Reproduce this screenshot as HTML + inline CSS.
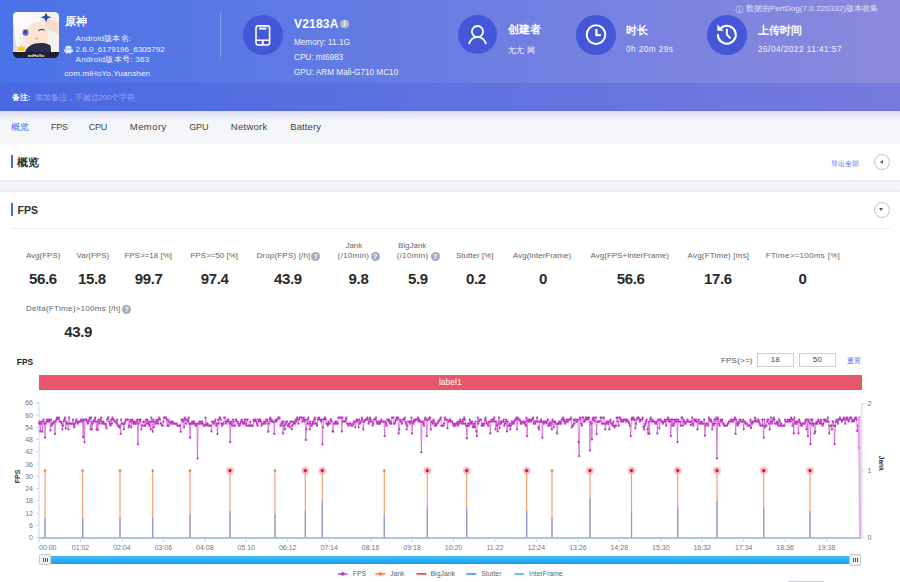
<!DOCTYPE html>
<html><head><meta charset="utf-8">
<style>
*{margin:0;padding:0;box-sizing:border-box}
html,body{width:900px;height:582px;overflow:hidden;background:#fff;font-family:"Liberation Sans",sans-serif}
.a{position:absolute}
.t{position:absolute;white-space:nowrap;line-height:1}
.w{color:#fff}
.hdr{left:0;top:0;width:900px;height:83px;background:linear-gradient(90deg,#4A72E8,#8B89DD)}
.rem{left:0;top:83px;width:900px;height:28px;background:linear-gradient(90deg,#4869E3,#767ADC)}
.tabs{left:0;top:111px;width:900px;height:33px;background:#f4f6fa}
.gap{left:0;top:180px;width:900px;height:12px;background:#f3f5f9}
.circ{position:absolute;border-radius:50%;background:#4457D8}
.lbl{font-size:8px;color:#666}
.val{font-size:15px;letter-spacing:-.35px;font-weight:bold;color:#2a2a2a}
.q{position:absolute;width:9px;height:9px;border-radius:50%;background:#a4aac4;color:#fff;font-size:7px;line-height:9px;text-align:center;font-weight:bold}
</style></head><body>
<!-- header -->
<div class="a hdr"></div>
<div class="a rem"></div>
<div class="a" style="left:0;top:108.5px;width:900px;height:2.5px;background:linear-gradient(rgba(40,60,200,0),rgba(40,60,200,.12))"></div>
<div class="a" style="left:0;top:111px;width:900px;height:9px;background:linear-gradient(#dcdcef,#f4f6fa)"></div>
<div class="a tabs" style="top:120px;height:24px"></div>

<!-- app icon -->
<svg class="a" style="left:12.7px;top:12px" width="46" height="46" viewBox="0 0 46 46">
 <defs><clipPath id="rc"><rect x="0" y="0" width="46" height="46" rx="4.5"/></clipPath></defs>
 <g clip-path="url(#rc)">
  <rect width="46" height="46" fill="#f4f1ec"/>
  <path d="M0 0 V40 H8 C6 30 6 18 10 12 C14 6 24 4 30 8 L34 0Z" fill="#fbfaf8"/>
  <path d="M0 8 C2 20 2 30 4 40 H0Z" fill="#dcdad8"/>
  <path d="M9 16 C10 10 18 8 25 10 C32 12 36 18 35 26 C34 32 28 35 20 34 C13 33 9 26 9 16Z" fill="#fbe4d4"/>
  <path d="M8 12 C12 6 22 5 28 9 C22 9 16 12 12 18 C11 22 10 24 9 26Z" fill="#fdfcfa"/>
  <ellipse cx="12.5" cy="20.5" rx="3" ry="3.2" fill="#5a6cc4"/>
  <ellipse cx="12.3" cy="19.8" rx="1.2" ry="1.4" fill="#2a3480"/>
  <path d="M25.5 18.8 q3 -2.2 6 -.6" stroke="#3a3040" stroke-width="1.1" fill="none"/>
  <path d="M22 26.5 q1.5 .8 3 0" stroke="#e07a80" stroke-width="1" fill="none"/>
  <path d="M31 8 C36 6 42 8 46 12 V22 C42 20 38 18 34 18 C32 16 31 12 31 8Z" fill="#f7dccb"/>
  <path d="M33 0.5 L34.6 4 L38.5 5.2 L34.6 6.4 L33 10 L31.4 6.4 L27.5 5.2 L31.4 4Z" fill="#2e4aa0"/>
  <path d="M12 40 C14 34 20 31 28 31 C34 31 38 33 40 36 V40Z" fill="#2b2b4c"/>
  <path d="M35 24 C40 26 44 30 46 34 V40 H38 C38 34 37 29 35 24Z" fill="#f6f4f1"/>
  <path d="M3.5 33.5 L6 35.5 L8 32.8 L10 35.5 L12.5 33.5 L11.5 39 H4.5Z" fill="#f2cd40"/>
  <rect x="0" y="40" width="46" height="6" fill="#202030"/>
  <text x="23" y="44.8" text-anchor="middle" font-size="4.4" font-weight="bold" fill="#fff">miHoYo</text>
 </g>
</svg>
<div class="t w" style="left:64.9px;top:15.8px;font-size:11px;font-weight:bold">原神</div>
<div class="t w" style="left:75.6px;top:35.4px;font-size:8px;letter-spacing:.15px;opacity:.92">Android版本名:</div>
<svg class="a" style="left:64px;top:45px" width="9" height="9" viewBox="0 0 9 9"><path d="M1.2 3.8 a3.3 3.1 0 0 1 6.6 0 z M1.2 4.3 h6.6 v2.6 q0 .8 -.8 .8 h-.6 v1.3 h-1 v-1.3 h-1.8 v1.3 h-1 v-1.3 h-.6 q-.8 0 -.8 -.8z M0 4.3 h.8 v2.8 h-.8z M8.2 4.3 h.8 v2.8 h-.8z" fill="#e8ecff"/><path d="M2.2 .6 l1 1.4 M6.8 .6 l-1 1.4" stroke="#e8ecff" stroke-width=".5"/></svg>
<div class="t w" style="left:75.6px;top:46.4px;font-size:8px;opacity:.92">2.6.0_6179196_6305792</div>
<div class="t w" style="left:75.6px;top:56.2px;font-size:8px;letter-spacing:.3px;opacity:.92">Android版本号: 363</div>
<div class="t w" style="left:64.4px;top:70px;font-size:8.1px;letter-spacing:.1px;opacity:.92">com.miHoYo.Yuanshen</div>
<div class="a" style="left:220px;top:13px;width:1px;height:44px;background:rgba(255,255,255,.3)"></div>

<!-- device -->
<div class="circ" style="left:243px;top:14.5px;width:40px;height:40px"></div>
<svg class="a" style="left:254px;top:23.5px" width="18" height="22" viewBox="0 0 18 22">
 <rect x="2" y="1.85" width="13.6" height="19.1" rx="2.2" fill="none" stroke="#fff" stroke-width="1.6"/>
 <rect x="5.1" y="3.5" width="7.4" height="2.1" fill="#fff" opacity=".9"/>
 <path d="M2 16.2 H15.6" stroke="#fff" stroke-width="1.5"/>
 <path d="M8.8 16.2 V21" stroke="#fff" stroke-width="2"/>
</svg>
<div class="t w" style="left:294px;top:17.6px;font-size:12px;letter-spacing:.2px;font-weight:bold">V2183A</div>
<div class="q" style="left:340.2px;top:19.6px;width:8.8px;height:8.8px;line-height:8.8px;background:#b8bccb;font-family:'Liberation Serif';font-style:italic;font-size:7.5px">i</div>
<div class="t w" style="left:294px;top:38.9px;font-size:8.2px;opacity:.92">Memory: 11.1G</div>
<div class="t w" style="left:294px;top:53.9px;font-size:8.2px;opacity:.92">CPU: mt6983</div>
<div class="t w" style="left:294px;top:68.9px;font-size:8.2px;opacity:.92">GPU: ARM Mali-G710 MC10</div>

<!-- creator -->
<div class="circ" style="left:457.6px;top:14.6px;width:39.5px;height:39.5px"></div>
<svg class="a" style="left:466px;top:23px" width="23" height="23" viewBox="0 0 23 23">
 <circle cx="11.5" cy="8.6" r="5.6" fill="none" stroke="#fff" stroke-width="1.8"/>
 <path d="M3.2 20.4 C4.5 16.5 7.8 14.2 11.5 14.2 C15.2 14.2 18.5 16.5 19.8 20.4" fill="none" stroke="#fff" stroke-width="1.8" stroke-linecap="round"/>
</svg>
<div class="t w" style="left:508px;top:24.2px;font-size:11px;font-weight:bold">创建者</div>
<div class="t w" style="left:508px;top:46.5px;font-size:8px;letter-spacing:.3px;opacity:.92">尢尢 网</div>

<!-- duration -->
<div class="circ" style="left:576px;top:15px;width:39.5px;height:39.5px"></div>
<svg class="a" style="left:583.5px;top:23px" width="24" height="24" viewBox="0 0 24 24">
 <circle cx="12" cy="11.6" r="9.3" fill="none" stroke="#fff" stroke-width="2"/>
 <path d="M12.4 5.9 V12.2 H16.8" fill="none" stroke="#fff" stroke-width="2.2"/>
</svg>
<div class="t w" style="left:626px;top:24.5px;font-size:11px;font-weight:bold">时长</div>
<div class="t w" style="left:626px;top:46.2px;font-size:8.2px;letter-spacing:.45px;opacity:.92">0h 20m 29s</div>

<!-- upload -->
<div class="circ" style="left:707.2px;top:15px;width:39.7px;height:39.5px"></div>
<svg class="a" style="left:713px;top:21px" width="28" height="28" viewBox="0 0 28 28">
 <path d="M4.9 13.9 A8.95 8.95 0 1 0 9.6 5.9" fill="none" stroke="#fff" stroke-width="2.1" stroke-linecap="round"/>
 <path d="M4.4 3.4 V9.8 H10.6 Z" fill="#fff"/><path d="M6 8.3 L9.8 5.8" stroke="#fff" stroke-width="2.1" stroke-linecap="round"/>
 <path d="M13.9 8.6 V13.6 L16.9 16.8" fill="none" stroke="#fff" stroke-width="2" stroke-linecap="round" stroke-linejoin="round"/>
</svg>
<div class="t w" style="left:758px;top:25px;font-size:11px;font-weight:bold">上传时间</div>
<div class="t w" style="left:758px;top:46.2px;font-size:8.2px;letter-spacing:.5px;opacity:.92">26/04/2022 11:41:57</div>

<svg class="a" style="left:734.5px;top:4.5px" width="9" height="9" viewBox="0 0 9 9"><circle cx="4.5" cy="4.5" r="3.6" fill="none" stroke="rgba(255,255,255,.6)" stroke-width=".7"/><path d="M4.5 3.8 V6.6 M4.5 2.4 V3" stroke="rgba(255,255,255,.8)" stroke-width=".8"/></svg>
<div class="t w" style="left:745.6px;top:5.3px;font-size:7.9px;letter-spacing:.12px;opacity:.75">数据由PerfDog(7.0.220332)版本收集</div>

<!-- remarks -->
<div class="t w" style="left:12px;top:93.7px;font-size:7.5px;font-weight:bold">备注:</div>
<div class="t" style="left:34.5px;top:93.7px;font-size:7.6px;color:rgba(255,255,255,.42)">添加备注，不超过200个字符</div>

<!-- tabs -->
<div class="t" style="left:10.5px;top:122.5px;font-size:9.2px;font-weight:500;color:#3c6cf2">概览</div>
<div class="t" style="left:51px;top:122.5px;font-size:9px;letter-spacing:-.3px;color:#444">FPS</div>
<div class="t" style="left:88.7px;top:122.5px;font-size:9px;letter-spacing:-.2px;color:#444">CPU</div>
<div class="t" style="left:129.8px;top:122px;font-size:9.5px;letter-spacing:.43px;color:#444">Memory</div>
<div class="t" style="left:189.3px;top:122.5px;font-size:9px;letter-spacing:-.2px;color:#444">GPU</div>
<div class="t" style="left:230.8px;top:122px;font-size:9.5px;letter-spacing:.27px;color:#444">Network</div>
<div class="t" style="left:290.3px;top:122px;font-size:9.5px;letter-spacing:.1px;color:#444">Battery</div>

<!-- card 1 -->
<div class="a" style="left:0;top:144px;width:900px;height:36px;background:#fff"></div>
<div class="a gap"></div>
<div class="a" style="left:0;top:180px;width:900px;height:3px;background:linear-gradient(#eaebf5,#f3f5f9)"></div>
<div class="a" style="left:0;top:189px;width:900px;height:3px;background:linear-gradient(#f3f5f9,#e8eaf2)"></div>
<div class="a" style="left:10.5px;top:155.3px;width:2.2px;height:13px;background:#3f6ff0"></div>
<div class="t" style="left:17.4px;top:157.2px;font-size:11px;font-weight:bold;color:#333">概览</div>
<div class="t" style="left:830.6px;top:159.5px;font-size:7.2px;font-weight:500;color:#3a6af0">导出全部</div>
<div class="a" style="left:873.7px;top:154px;width:16.4px;height:16.4px;border-radius:50%;border:1px solid #c4c4cc"></div>
<div class="a" style="left:879.6px;top:159.7px;width:0;height:0;border-top:2.6px solid transparent;border-bottom:2.6px solid transparent;border-right:3.4px solid #555"></div>

<!-- card 2 -->
<div class="a" style="left:10.5px;top:202.8px;width:2.2px;height:13.6px;background:#3f6ff0"></div>
<div class="t" style="left:17.5px;top:205px;font-size:10.5px;font-weight:bold;color:#333">FPS</div>
<div class="a" style="left:873.7px;top:201.5px;width:16.4px;height:16.4px;border-radius:50%;border:1px solid #c4c4cc"></div>
<div class="a" style="left:879.2px;top:208.4px;width:0;height:0;border-left:2.7px solid transparent;border-right:2.7px solid transparent;border-top:3.4px solid #555"></div>
<div class="a" style="left:11px;top:227.6px;width:879px;height:1px;background:#ececf0"></div>

<!-- metrics -->
<div class="t lbl" style="left:25.9px;top:252.1px">Avg(FPS)</div>
<div class="t val" style="left:29px;top:271.4px">56.6</div>
<div class="t lbl" style="left:76.5px;top:252.1px">Var(FPS)</div>
<div class="t val" style="left:78px;top:271.4px">15.8</div>
<div class="t lbl" style="left:124.4px;top:252.1px">FPS&gt;=18 [%]</div>
<div class="t val" style="left:134.7px;top:271.4px">99.7</div>
<div class="t lbl" style="left:190.4px;top:252.1px">FPS&gt;=50 [%]</div>
<div class="t val" style="left:200.7px;top:271.4px">97.4</div>
<div class="t lbl" style="left:256.4px;top:252.1px;letter-spacing:.18px">Drop(FPS) [/h]</div>
<div class="q" style="left:311.25px;top:251.95px">?</div>
<div class="t val" style="left:274px;top:271.4px">43.9</div>
<div class="t lbl" style="left:345.4px;top:241.8px">Jank</div>
<div class="t lbl" style="left:337.6px;top:252.1px;letter-spacing:.3px">(/10min)</div>
<div class="q" style="left:370.75px;top:251.95px">?</div>
<div class="t val" style="left:348.6px;top:271.4px">9.8</div>
<div class="t lbl" style="left:398px;top:241.8px">BigJank</div>
<div class="t lbl" style="left:396.7px;top:252.1px;letter-spacing:.3px">(/10min)</div>
<div class="q" style="left:430.55px;top:251.95px">?</div>
<div class="t val" style="left:408px;top:271.4px">5.9</div>
<div class="t lbl" style="left:456px;top:252.1px">Stutter [%]</div>
<div class="t val" style="left:466px;top:271.4px">0.2</div>
<div class="t lbl" style="left:513px;top:252.1px">Avg(InterFrame)</div>
<div class="t val" style="left:539px;top:271.4px">0</div>
<div class="t lbl" style="left:590.6px;top:252.1px">Avg(FPS+InterFrame)</div>
<div class="t val" style="left:616.7px;top:271.4px">56.6</div>
<div class="t lbl" style="left:687.6px;top:252.1px;letter-spacing:.2px">Avg(FTime) [ms]</div>
<div class="t val" style="left:704px;top:271.4px">17.6</div>
<div class="t lbl" style="left:765.8px;top:252.1px;letter-spacing:.3px">FTime&gt;=100ms [%]</div>
<div class="t val" style="left:798.4px;top:271.4px">0</div>
<div class="t lbl" style="left:26px;top:305.3px;letter-spacing:.27px">Delta(FTime)&gt;100ms [/h]</div>
<div class="q" style="left:122.05px;top:304.95px">?</div>
<div class="t val" style="left:64.3px;top:324.3px">43.9</div>

<!-- chart header -->
<div class="t" style="left:16.8px;top:357.6px;font-size:8.4px;font-weight:bold;color:#222">FPS</div>
<div class="t" style="left:721px;top:357px;font-size:8px;letter-spacing:.2px;color:#555">FPS(&gt;=)</div>
<div class="a" style="left:757px;top:353.4px;width:36.6px;height:13.2px;border:1px solid #cfd1da;font-size:8px;color:#444;text-align:center;line-height:12.6px">18</div>
<div class="a" style="left:799px;top:353.4px;width:36.6px;height:13.2px;border:1px solid #cfd1da;font-size:8px;color:#444;text-align:center;line-height:12.6px">50</div>
<div class="t" style="left:847px;top:357px;font-size:7.4px;font-weight:500;color:#3a6af0">重置</div>
<div class="a" style="left:39px;top:374.7px;width:822.6px;height:15.3px;background:#E8566A;color:#fff;font-size:8.5px;text-align:center;line-height:14.6px">label1</div>

<svg width="900" height="582" style="position:absolute;left:0;top:0">
<line x1="39" y1="402.7" x2="39" y2="538" stroke="#ccd6eb" stroke-width="1"/>
<line x1="861.8" y1="402.7" x2="861.8" y2="538" stroke="#d8dbe4" stroke-width="1.2"/>
<line x1="36" y1="537.7" x2="39" y2="537.7" stroke="#ccd6eb" stroke-width="1"/>
<text x="33" y="540.2" text-anchor="end" font-size="7" fill="#777">0</text>
<line x1="36" y1="525.4" x2="39" y2="525.4" stroke="#ccd6eb" stroke-width="1"/>
<text x="33" y="527.9" text-anchor="end" font-size="7" fill="#777">6</text>
<line x1="36" y1="513.2" x2="39" y2="513.2" stroke="#ccd6eb" stroke-width="1"/>
<text x="33" y="515.7" text-anchor="end" font-size="7" fill="#777">12</text>
<line x1="36" y1="500.9" x2="39" y2="500.9" stroke="#ccd6eb" stroke-width="1"/>
<text x="33" y="503.4" text-anchor="end" font-size="7" fill="#777">18</text>
<line x1="36" y1="488.6" x2="39" y2="488.6" stroke="#ccd6eb" stroke-width="1"/>
<text x="33" y="491.1" text-anchor="end" font-size="7" fill="#777">24</text>
<line x1="36" y1="476.4" x2="39" y2="476.4" stroke="#ccd6eb" stroke-width="1"/>
<text x="33" y="478.9" text-anchor="end" font-size="7" fill="#777">30</text>
<line x1="36" y1="464.1" x2="39" y2="464.1" stroke="#ccd6eb" stroke-width="1"/>
<text x="33" y="466.6" text-anchor="end" font-size="7" fill="#777">36</text>
<line x1="36" y1="451.8" x2="39" y2="451.8" stroke="#ccd6eb" stroke-width="1"/>
<text x="33" y="454.3" text-anchor="end" font-size="7" fill="#777">42</text>
<line x1="36" y1="439.5" x2="39" y2="439.5" stroke="#ccd6eb" stroke-width="1"/>
<text x="33" y="442.0" text-anchor="end" font-size="7" fill="#777">48</text>
<line x1="36" y1="427.3" x2="39" y2="427.3" stroke="#ccd6eb" stroke-width="1"/>
<text x="33" y="429.8" text-anchor="end" font-size="7" fill="#777">54</text>
<line x1="36" y1="415.0" x2="39" y2="415.0" stroke="#ccd6eb" stroke-width="1"/>
<text x="33" y="417.5" text-anchor="end" font-size="7" fill="#777">60</text>
<line x1="36" y1="402.7" x2="39" y2="402.7" stroke="#ccd6eb" stroke-width="1"/>
<text x="33" y="405.2" text-anchor="end" font-size="7" fill="#777">66</text>
<line x1="861.5" y1="537.7" x2="864.5" y2="537.7" stroke="#ccd6eb" stroke-width="1"/>
<text x="867.5" y="540.2" font-size="7" fill="#777">0</text>
<line x1="861.5" y1="470.6" x2="864.5" y2="470.6" stroke="#ccd6eb" stroke-width="1"/>
<text x="867.5" y="473.1" font-size="7" fill="#777">1</text>
<line x1="861.5" y1="403.5" x2="864.5" y2="403.5" stroke="#ccd6eb" stroke-width="1"/>
<text x="867.5" y="406.0" font-size="7" fill="#777">2</text>
<line x1="39.0" y1="539.8" x2="39.0" y2="541.6" stroke="#aab" stroke-width="0.8"/>
<text x="39.0" y="549.5" font-size="7" fill="#777">00:00</text>
<line x1="80.5" y1="539.8" x2="80.5" y2="541.6" stroke="#aab" stroke-width="0.8"/>
<text x="80.5" y="549.5" text-anchor="middle" font-size="7" fill="#777">01:02</text>
<line x1="121.9" y1="539.8" x2="121.9" y2="541.6" stroke="#aab" stroke-width="0.8"/>
<text x="121.9" y="549.5" text-anchor="middle" font-size="7" fill="#777">02:04</text>
<line x1="163.4" y1="539.8" x2="163.4" y2="541.6" stroke="#aab" stroke-width="0.8"/>
<text x="163.4" y="549.5" text-anchor="middle" font-size="7" fill="#777">03:06</text>
<line x1="204.8" y1="539.8" x2="204.8" y2="541.6" stroke="#aab" stroke-width="0.8"/>
<text x="204.8" y="549.5" text-anchor="middle" font-size="7" fill="#777">04:08</text>
<line x1="246.2" y1="539.8" x2="246.2" y2="541.6" stroke="#aab" stroke-width="0.8"/>
<text x="246.2" y="549.5" text-anchor="middle" font-size="7" fill="#777">05:10</text>
<line x1="287.7" y1="539.8" x2="287.7" y2="541.6" stroke="#aab" stroke-width="0.8"/>
<text x="287.7" y="549.5" text-anchor="middle" font-size="7" fill="#777">06:12</text>
<line x1="329.2" y1="539.8" x2="329.2" y2="541.6" stroke="#aab" stroke-width="0.8"/>
<text x="329.2" y="549.5" text-anchor="middle" font-size="7" fill="#777">07:14</text>
<line x1="370.6" y1="539.8" x2="370.6" y2="541.6" stroke="#aab" stroke-width="0.8"/>
<text x="370.6" y="549.5" text-anchor="middle" font-size="7" fill="#777">08:16</text>
<line x1="412.1" y1="539.8" x2="412.1" y2="541.6" stroke="#aab" stroke-width="0.8"/>
<text x="412.1" y="549.5" text-anchor="middle" font-size="7" fill="#777">09:18</text>
<line x1="453.5" y1="539.8" x2="453.5" y2="541.6" stroke="#aab" stroke-width="0.8"/>
<text x="453.5" y="549.5" text-anchor="middle" font-size="7" fill="#777">10:20</text>
<line x1="495.0" y1="539.8" x2="495.0" y2="541.6" stroke="#aab" stroke-width="0.8"/>
<text x="495.0" y="549.5" text-anchor="middle" font-size="7" fill="#777">11:22</text>
<line x1="536.4" y1="539.8" x2="536.4" y2="541.6" stroke="#aab" stroke-width="0.8"/>
<text x="536.4" y="549.5" text-anchor="middle" font-size="7" fill="#777">12:24</text>
<line x1="577.9" y1="539.8" x2="577.9" y2="541.6" stroke="#aab" stroke-width="0.8"/>
<text x="577.9" y="549.5" text-anchor="middle" font-size="7" fill="#777">13:26</text>
<line x1="619.3" y1="539.8" x2="619.3" y2="541.6" stroke="#aab" stroke-width="0.8"/>
<text x="619.3" y="549.5" text-anchor="middle" font-size="7" fill="#777">14:28</text>
<line x1="660.8" y1="539.8" x2="660.8" y2="541.6" stroke="#aab" stroke-width="0.8"/>
<text x="660.8" y="549.5" text-anchor="middle" font-size="7" fill="#777">15:30</text>
<line x1="702.2" y1="539.8" x2="702.2" y2="541.6" stroke="#aab" stroke-width="0.8"/>
<text x="702.2" y="549.5" text-anchor="middle" font-size="7" fill="#777">16:32</text>
<line x1="743.7" y1="539.8" x2="743.7" y2="541.6" stroke="#aab" stroke-width="0.8"/>
<text x="743.7" y="549.5" text-anchor="middle" font-size="7" fill="#777">17:34</text>
<line x1="785.1" y1="539.8" x2="785.1" y2="541.6" stroke="#aab" stroke-width="0.8"/>
<text x="785.1" y="549.5" text-anchor="middle" font-size="7" fill="#777">18:36</text>
<line x1="826.6" y1="539.8" x2="826.6" y2="541.6" stroke="#aab" stroke-width="0.8"/>
<text x="826.6" y="549.5" text-anchor="middle" font-size="7" fill="#777">19:38</text>
<line x1="39" y1="538.4" x2="861" y2="538.4" stroke="#9cc8e8" stroke-width="1"/>
<line x1="39" y1="537.6" x2="861" y2="537.6" stroke="#f5a878" stroke-width="1"/>
<line x1="45" y1="537.5" x2="45" y2="470.6" stroke="#fc9d70" stroke-width="1.2"/>
<line x1="45" y1="537.5" x2="45" y2="517.7" stroke="#8a9cdc" stroke-width="1.2"/>
<circle cx="45" cy="470.6" r="1.3" fill="#f5802a"/>
<line x1="82.7" y1="537.5" x2="82.7" y2="470.6" stroke="#fc9d70" stroke-width="1.2"/>
<line x1="82.7" y1="537.5" x2="82.7" y2="517.7" stroke="#8a9cdc" stroke-width="1.2"/>
<circle cx="82.7" cy="470.6" r="1.3" fill="#f5802a"/>
<line x1="120" y1="537.5" x2="120" y2="470.6" stroke="#fc9d70" stroke-width="1.2"/>
<line x1="120" y1="537.5" x2="120" y2="517.7" stroke="#8a9cdc" stroke-width="1.2"/>
<circle cx="120" cy="470.6" r="1.3" fill="#f5802a"/>
<line x1="152.7" y1="537.5" x2="152.7" y2="470.6" stroke="#fc9d70" stroke-width="1.2"/>
<line x1="152.7" y1="537.5" x2="152.7" y2="517.7" stroke="#8a9cdc" stroke-width="1.2"/>
<circle cx="152.7" cy="470.6" r="1.3" fill="#f5802a"/>
<line x1="190" y1="537.5" x2="190" y2="470.6" stroke="#fc9d70" stroke-width="1.2"/>
<line x1="190" y1="537.5" x2="190" y2="514.3" stroke="#8a9cdc" stroke-width="1.2"/>
<circle cx="190" cy="470.6" r="1.3" fill="#f5802a"/>
<line x1="230" y1="537.5" x2="230" y2="470.6" stroke="#fc9d70" stroke-width="1.2"/>
<line x1="230" y1="537.5" x2="230" y2="511" stroke="#8a9cdc" stroke-width="1.2"/>
<circle cx="230" cy="470.6" r="3.8" fill="#f2a0a8" opacity="0.7"/>
<circle cx="230" cy="470.6" r="1.6" fill="#e0102a"/>
<line x1="275" y1="537.5" x2="275" y2="470.6" stroke="#fc9d70" stroke-width="1.2"/>
<line x1="275" y1="537.5" x2="275" y2="514.3" stroke="#8a9cdc" stroke-width="1.2"/>
<circle cx="275" cy="470.6" r="1.3" fill="#f5802a"/>
<line x1="305.3" y1="537.5" x2="305.3" y2="470.6" stroke="#fc9d70" stroke-width="1.2"/>
<line x1="305.3" y1="537.5" x2="305.3" y2="511" stroke="#8a9cdc" stroke-width="1.2"/>
<circle cx="305.3" cy="470.6" r="3.8" fill="#f2a0a8" opacity="0.7"/>
<circle cx="305.3" cy="470.6" r="1.6" fill="#e0102a"/>
<line x1="322.3" y1="537.5" x2="322.3" y2="470.6" stroke="#fc9d70" stroke-width="1.2"/>
<line x1="322.3" y1="537.5" x2="322.3" y2="501" stroke="#8a9cdc" stroke-width="1.2"/>
<circle cx="322.3" cy="470.6" r="3.8" fill="#f2a0a8" opacity="0.7"/>
<circle cx="322.3" cy="470.6" r="1.6" fill="#e0102a"/>
<line x1="384.3" y1="537.5" x2="384.3" y2="470.6" stroke="#fc9d70" stroke-width="1.2"/>
<line x1="384.3" y1="537.5" x2="384.3" y2="514.3" stroke="#8a9cdc" stroke-width="1.2"/>
<circle cx="384.3" cy="470.6" r="1.3" fill="#f5802a"/>
<line x1="427.3" y1="537.5" x2="427.3" y2="470.6" stroke="#fc9d70" stroke-width="1.2"/>
<line x1="427.3" y1="537.5" x2="427.3" y2="507.7" stroke="#8a9cdc" stroke-width="1.2"/>
<circle cx="427.3" cy="470.6" r="3.8" fill="#f2a0a8" opacity="0.7"/>
<circle cx="427.3" cy="470.6" r="1.6" fill="#e0102a"/>
<line x1="466.7" y1="537.5" x2="466.7" y2="470.6" stroke="#fc9d70" stroke-width="1.2"/>
<line x1="466.7" y1="537.5" x2="466.7" y2="507.7" stroke="#8a9cdc" stroke-width="1.2"/>
<circle cx="466.7" cy="470.6" r="3.8" fill="#f2a0a8" opacity="0.7"/>
<circle cx="466.7" cy="470.6" r="1.6" fill="#e0102a"/>
<line x1="526.7" y1="537.5" x2="526.7" y2="470.6" stroke="#fc9d70" stroke-width="1.2"/>
<line x1="526.7" y1="537.5" x2="526.7" y2="511" stroke="#8a9cdc" stroke-width="1.2"/>
<circle cx="526.7" cy="470.6" r="3.8" fill="#f2a0a8" opacity="0.7"/>
<circle cx="526.7" cy="470.6" r="1.6" fill="#e0102a"/>
<line x1="552" y1="537.5" x2="552" y2="470.6" stroke="#fc9d70" stroke-width="1.2"/>
<line x1="552" y1="537.5" x2="552" y2="517.7" stroke="#8a9cdc" stroke-width="1.2"/>
<circle cx="552" cy="470.6" r="1.3" fill="#f5802a"/>
<line x1="590" y1="537.5" x2="590" y2="470.6" stroke="#fc9d70" stroke-width="1.2"/>
<line x1="590" y1="537.5" x2="590" y2="497.7" stroke="#8a9cdc" stroke-width="1.2"/>
<circle cx="590" cy="470.6" r="3.8" fill="#f2a0a8" opacity="0.7"/>
<circle cx="590" cy="470.6" r="1.6" fill="#e0102a"/>
<line x1="631.5" y1="537.5" x2="631.5" y2="470.6" stroke="#fc9d70" stroke-width="1.2"/>
<line x1="631.5" y1="537.5" x2="631.5" y2="511" stroke="#8a9cdc" stroke-width="1.2"/>
<circle cx="631.5" cy="470.6" r="3.8" fill="#f2a0a8" opacity="0.7"/>
<circle cx="631.5" cy="470.6" r="1.6" fill="#e0102a"/>
<line x1="677.7" y1="537.5" x2="677.7" y2="470.6" stroke="#fc9d70" stroke-width="1.2"/>
<line x1="677.7" y1="537.5" x2="677.7" y2="507.7" stroke="#8a9cdc" stroke-width="1.2"/>
<circle cx="677.7" cy="470.6" r="3.8" fill="#f2a0a8" opacity="0.7"/>
<circle cx="677.7" cy="470.6" r="1.6" fill="#e0102a"/>
<line x1="717" y1="537.5" x2="717" y2="470.6" stroke="#fc9d70" stroke-width="1.2"/>
<line x1="717" y1="537.5" x2="717" y2="501" stroke="#8a9cdc" stroke-width="1.2"/>
<circle cx="717" cy="470.6" r="3.8" fill="#f2a0a8" opacity="0.7"/>
<circle cx="717" cy="470.6" r="1.6" fill="#e0102a"/>
<line x1="763.7" y1="537.5" x2="763.7" y2="470.6" stroke="#fc9d70" stroke-width="1.2"/>
<line x1="763.7" y1="537.5" x2="763.7" y2="507.7" stroke="#8a9cdc" stroke-width="1.2"/>
<circle cx="763.7" cy="470.6" r="3.8" fill="#f2a0a8" opacity="0.7"/>
<circle cx="763.7" cy="470.6" r="1.6" fill="#e0102a"/>
<line x1="810" y1="537.5" x2="810" y2="470.6" stroke="#fc9d70" stroke-width="1.2"/>
<line x1="810" y1="537.5" x2="810" y2="511" stroke="#8a9cdc" stroke-width="1.2"/>
<circle cx="810" cy="470.6" r="3.8" fill="#f2a0a8" opacity="0.7"/>
<circle cx="810" cy="470.6" r="1.6" fill="#e0102a"/>
<path d="M39.0 423.7 L39.7 421.6 L40.3 431.4 L41.0 423.7 L41.7 421.6 L42.3 431.7 L43.0 421.6 L43.7 419.6 L44.3 423.7 L45.0 437.7 L45.7 423.7 L46.4 421.6 L47.0 419.6 L47.7 421.6 L48.4 419.6 L49.0 421.6 L49.7 419.6 L50.4 430.6 L51.0 419.6 L51.7 425.7 L52.4 423.7 L53.0 423.7 L53.7 421.6 L54.4 421.6 L55.0 433.9 L55.7 421.6 L56.4 419.6 L57.1 417.6 L57.7 417.6 L58.4 419.6 L59.1 417.6 L59.7 421.6 L60.4 421.6 L61.1 421.6 L61.7 423.7 L62.4 429.3 L63.1 425.7 L63.7 421.6 L64.4 419.6 L65.1 417.6 L65.7 428.3 L66.4 421.6 L67.1 423.7 L67.7 423.7 L68.4 429.3 L69.1 417.6 L69.8 423.7 L70.4 423.7 L71.1 423.7 L71.8 423.7 L72.4 423.7 L73.1 419.6 L73.8 425.4 L74.4 427.3 L75.1 423.7 L75.8 421.6 L76.4 419.6 L77.1 421.6 L77.8 423.7 L78.4 421.6 L79.1 421.6 L79.8 421.6 L80.5 421.6 L81.1 419.6 L81.8 419.6 L82.5 421.6 L83.1 437.2 L83.8 419.6 L84.5 442.1 L85.1 419.6 L85.8 419.6 L86.5 419.6 L87.1 421.6 L87.8 423.7 L88.5 421.6 L89.1 419.6 L89.8 417.6 L90.5 429.3 L91.1 417.6 L91.8 429.3 L92.5 423.7 L93.2 421.6 L93.8 421.6 L94.5 419.6 L95.2 417.6 L95.8 421.6 L96.5 429.3 L97.2 421.6 L97.8 429.9 L98.5 419.6 L99.2 423.7 L99.8 421.6 L100.5 419.6 L101.2 417.6 L101.8 423.7 L102.5 421.6 L103.2 421.6 L103.9 423.7 L104.5 423.7 L105.2 423.7 L105.9 425.7 L106.5 428.3 L107.2 419.6 L107.9 417.6 L108.5 417.6 L109.2 421.6 L109.9 423.7 L110.5 425.7 L111.2 419.6 L111.9 423.7 L112.5 417.6 L113.2 419.6 L113.9 419.6 L114.5 421.6 L115.2 421.6 L115.9 421.6 L116.6 423.7 L117.2 419.6 L117.9 425.7 L118.6 425.7 L119.2 427.3 L119.9 425.7 L120.6 433.9 L121.2 419.6 L121.9 423.7 L122.6 423.7 L123.2 423.7 L123.9 429.3 L124.6 423.7 L125.2 421.6 L125.9 419.6 L126.6 419.6 L127.3 419.6 L127.9 419.6 L128.6 427.3 L129.3 425.7 L129.9 421.6 L130.6 419.6 L131.3 427.3 L131.9 421.6 L132.6 419.6 L133.3 423.7 L133.9 421.6 L134.6 423.7 L135.3 421.6 L135.9 423.7 L136.6 421.6 L137.3 419.6 L137.9 444.3 L138.6 423.7 L139.3 419.6 L140.0 421.6 L140.6 419.6 L141.3 429.3 L142.0 425.7 L142.6 425.7 L143.3 421.6 L144.0 421.6 L144.6 425.7 L145.3 425.7 L146.0 419.6 L146.6 423.7 L147.3 419.6 L148.0 421.6 L148.6 423.7 L149.3 425.7 L150.0 421.6 L150.7 429.3 L151.3 417.6 L152.0 421.6 L152.7 431.7 L153.3 419.6 L154.0 427.3 L154.7 421.6 L155.3 421.6 L156.0 423.7 L156.7 419.6 L157.3 421.6 L158.0 423.7 L158.7 419.6 L159.3 417.6 L160.0 419.6 L160.7 423.7 L161.3 423.7 L162.0 425.7 L162.7 425.7 L163.4 421.6 L164.0 417.6 L164.7 417.6 L165.4 417.6 L166.0 417.6 L166.7 419.6 L167.4 425.7 L168.0 419.6 L168.7 425.7 L169.4 421.6 L170.0 421.6 L170.7 423.7 L171.4 423.7 L172.0 421.6 L172.7 421.6 L173.4 423.7 L174.1 423.7 L174.7 423.7 L175.4 423.7 L176.1 423.7 L176.7 423.7 L177.4 425.7 L178.1 425.7 L178.7 425.7 L179.4 425.7 L180.1 425.7 L180.7 431.7 L181.4 419.6 L182.1 419.6 L182.7 421.6 L183.4 419.6 L184.1 427.3 L184.7 417.6 L185.4 419.6 L186.1 423.7 L186.8 419.6 L187.4 419.6 L188.1 421.6 L188.8 417.6 L189.4 423.7 L190.1 437.7 L190.8 423.7 L191.4 423.7 L192.1 421.6 L192.8 423.7 L193.4 421.6 L194.1 421.6 L194.8 423.7 L195.4 425.7 L196.1 425.7 L196.8 423.7 L197.5 458.3 L198.1 423.7 L198.8 423.7 L199.5 421.6 L200.1 423.7 L200.8 423.7 L201.5 421.6 L202.1 421.6 L202.8 423.7 L203.5 425.7 L204.1 425.7 L204.8 425.7 L205.5 417.6 L206.1 425.0 L206.8 423.7 L207.5 423.7 L208.1 425.7 L208.8 425.7 L209.5 425.7 L210.2 425.7 L210.8 425.7 L211.5 431.4 L212.2 421.6 L212.8 421.6 L213.5 423.7 L214.2 423.7 L214.8 421.6 L215.5 419.6 L216.2 425.7 L216.8 423.7 L217.5 433.9 L218.2 419.6 L218.8 423.7 L219.5 417.6 L220.2 417.6 L220.9 419.6 L221.5 423.7 L222.2 425.7 L222.9 423.7 L223.5 423.7 L224.2 417.6 L224.9 417.6 L225.5 421.6 L226.2 423.7 L226.9 421.6 L227.5 419.6 L228.2 419.6 L228.9 421.6 L229.5 423.7 L230.2 442.1 L230.9 421.6 L231.5 423.7 L232.2 425.7 L232.9 419.6 L233.6 421.6 L234.2 425.7 L234.9 425.7 L235.6 419.6 L236.2 419.6 L236.9 421.6 L237.6 421.6 L238.2 423.7 L238.9 425.7 L239.6 425.7 L240.2 423.7 L240.9 421.6 L241.6 419.6 L242.2 421.6 L242.9 423.7 L243.6 423.7 L244.2 421.6 L244.9 419.6 L245.6 423.7 L246.3 425.7 L246.9 419.6 L247.6 419.6 L248.3 425.7 L248.9 425.7 L249.6 425.7 L250.3 421.6 L250.9 425.7 L251.6 425.7 L252.3 425.7 L252.9 425.7 L253.6 419.6 L254.3 421.6 L254.9 419.6 L255.6 419.6 L256.3 421.6 L257.0 423.7 L257.6 425.7 L258.3 419.6 L259.0 421.6 L259.6 419.6 L260.3 419.6 L261.0 421.6 L261.6 425.7 L262.3 423.7 L263.0 423.7 L263.6 423.7 L264.3 421.6 L265.0 421.6 L265.6 423.7 L266.3 419.6 L267.0 419.6 L267.6 421.6 L268.3 431.7 L269.0 423.7 L269.7 419.6 L270.3 417.6 L271.0 421.6 L271.7 419.6 L272.3 421.6 L273.0 421.6 L273.7 421.6 L274.3 433.9 L275.0 421.6 L275.7 419.6 L276.3 421.6 L277.0 419.6 L277.7 419.6 L278.3 417.6 L279.0 417.6 L279.7 417.6 L280.4 425.7 L281.0 425.7 L281.7 423.7 L282.4 421.6 L283.0 433.4 L283.7 421.6 L284.4 425.7 L285.0 429.3 L285.7 423.7 L286.4 421.6 L287.0 421.6 L287.7 425.7 L288.4 425.7 L289.0 423.7 L289.7 427.3 L290.4 421.6 L291.0 421.6 L291.7 429.3 L292.4 425.7 L293.1 421.6 L293.7 423.7 L294.4 421.6 L295.1 423.7 L295.7 419.6 L296.4 421.6 L297.1 417.6 L297.7 419.6 L298.4 423.7 L299.1 419.6 L299.7 417.6 L300.4 417.6 L301.1 417.6 L301.7 417.6 L302.4 421.6 L303.1 419.6 L303.8 417.6 L304.4 421.6 L305.1 419.6 L305.8 439.9 L306.4 429.3 L307.1 419.6 L307.8 423.7 L308.4 417.6 L309.1 423.7 L309.8 429.3 L310.4 421.6 L311.1 425.7 L311.8 425.7 L312.4 423.7 L313.1 421.6 L313.8 423.7 L314.4 419.6 L315.1 417.6 L315.8 423.7 L316.5 423.7 L317.1 425.7 L317.8 419.6 L318.5 417.6 L319.1 417.6 L319.8 419.6 L320.5 419.6 L321.1 421.6 L321.8 419.6 L322.5 444.3 L323.1 427.3 L323.8 419.6 L324.5 417.6 L325.1 417.6 L325.8 419.6 L326.5 423.7 L327.2 423.7 L327.8 425.7 L328.5 421.6 L329.2 423.7 L329.8 423.7 L330.5 419.6 L331.2 419.6 L331.8 421.6 L332.5 431.4 L333.2 431.7 L333.8 423.7 L334.5 423.7 L335.2 421.6 L335.8 423.7 L336.5 421.6 L337.2 423.7 L337.8 423.7 L338.5 417.6 L339.2 417.6 L339.9 417.6 L340.5 417.6 L341.2 417.6 L341.9 431.4 L342.5 417.6 L343.2 421.6 L343.9 421.6 L344.5 421.6 L345.2 421.6 L345.9 419.6 L346.5 417.6 L347.2 423.7 L347.9 423.7 L348.5 425.7 L349.2 423.7 L349.9 423.7 L350.6 423.7 L351.2 425.7 L351.9 425.7 L352.6 425.7 L353.2 423.7 L353.9 421.6 L354.6 421.6 L355.2 427.3 L355.9 421.6 L356.6 419.6 L357.2 421.6 L357.9 419.6 L358.6 427.3 L359.2 419.6 L359.9 423.7 L360.6 421.6 L361.2 421.6 L361.9 417.6 L362.6 419.6 L363.3 429.4 L363.9 421.6 L364.6 421.6 L365.3 419.6 L365.9 419.6 L366.6 419.6 L367.3 417.6 L367.9 419.6 L368.6 423.7 L369.3 421.6 L369.9 417.6 L370.6 419.6 L371.3 421.6 L371.9 421.6 L372.6 425.7 L373.3 423.7 L374.0 419.6 L374.6 419.6 L375.3 419.6 L376.0 417.6 L376.6 421.6 L377.3 423.7 L378.0 421.6 L378.6 423.7 L379.3 421.6 L380.0 423.7 L380.6 421.6 L381.3 419.6 L382.0 421.6 L382.6 421.6 L383.3 421.6 L384.0 421.6 L384.6 436.1 L385.3 421.6 L386.0 423.7 L386.7 425.7 L387.3 419.6 L388.0 419.6 L388.7 421.6 L389.3 419.6 L390.0 423.7 L390.7 421.6 L391.3 423.7 L392.0 417.6 L392.7 417.6 L393.3 417.6 L394.0 423.7 L394.7 423.7 L395.3 421.6 L396.0 419.6 L396.7 417.6 L397.4 419.6 L398.0 417.6 L398.7 433.4 L399.4 429.3 L400.0 419.6 L400.7 421.6 L401.4 421.6 L402.0 423.7 L402.7 419.6 L403.4 419.6 L404.0 419.6 L404.7 417.6 L405.4 421.6 L406.0 423.7 L406.7 429.3 L407.4 425.7 L408.0 421.6 L408.7 421.6 L409.4 421.6 L410.1 423.7 L410.7 421.6 L411.4 417.6 L412.1 433.4 L412.7 421.6 L413.4 423.7 L414.1 419.6 L414.7 421.6 L415.4 419.6 L416.1 419.6 L416.7 419.6 L417.4 419.6 L418.1 417.6 L418.7 421.6 L419.4 419.6 L420.1 421.6 L420.8 421.6 L421.4 452.3 L422.1 421.6 L422.8 421.6 L423.4 423.7 L424.1 425.7 L424.8 419.6 L425.4 417.6 L426.1 419.6 L426.8 436.1 L427.4 419.6 L428.1 419.6 L428.8 419.6 L429.4 417.6 L430.1 417.6 L430.8 429.4 L431.4 421.6 L432.1 421.6 L432.8 423.7 L433.5 419.6 L434.1 421.6 L434.8 425.7 L435.5 423.7 L436.1 425.7 L436.8 423.7 L437.5 423.7 L438.1 421.6 L438.8 421.6 L439.5 419.6 L440.1 419.6 L440.8 417.6 L441.5 425.7 L442.1 425.7 L442.8 425.7 L443.5 425.7 L444.2 423.7 L444.8 417.6 L445.5 419.6 L446.2 419.6 L446.8 419.6 L447.5 428.3 L448.2 421.6 L448.8 421.6 L449.5 419.6 L450.2 419.6 L450.8 421.6 L451.5 421.6 L452.2 421.6 L452.8 423.7 L453.5 425.7 L454.2 425.7 L454.8 423.7 L455.5 425.7 L456.2 423.7 L456.9 423.7 L457.5 421.6 L458.2 425.7 L458.9 423.7 L459.5 421.6 L460.2 419.6 L460.9 421.6 L461.5 423.7 L462.2 421.6 L462.9 419.6 L463.5 423.7 L464.2 417.6 L464.9 419.6 L465.5 423.7 L466.2 425.7 L466.9 438.3 L467.6 425.7 L468.2 423.7 L468.9 425.7 L469.6 419.6 L470.2 423.7 L470.9 421.6 L471.6 423.7 L472.2 421.6 L472.9 427.3 L473.6 425.7 L474.2 423.7 L474.9 427.3 L475.6 421.6 L476.2 431.4 L476.9 436.1 L477.6 417.6 L478.2 423.7 L478.9 421.6 L479.6 419.6 L480.3 419.6 L480.9 419.6 L481.6 425.7 L482.3 423.7 L482.9 425.7 L483.6 425.7 L484.3 423.7 L484.9 419.6 L485.6 417.6 L486.3 421.6 L486.9 423.7 L487.6 423.7 L488.3 425.7 L488.9 421.6 L489.6 421.6 L490.3 433.4 L491.0 421.6 L491.6 419.6 L492.3 419.6 L493.0 421.6 L493.6 419.6 L494.3 417.6 L495.0 421.6 L495.6 429.3 L496.3 421.6 L497.0 425.7 L497.6 431.4 L498.3 423.7 L499.0 417.6 L499.6 428.3 L500.3 421.6 L501.0 423.7 L501.6 421.6 L502.3 421.6 L503.0 421.6 L503.7 419.6 L504.3 425.7 L505.0 423.7 L505.7 421.6 L506.3 419.6 L507.0 431.4 L507.7 421.6 L508.3 425.7 L509.0 425.7 L509.7 423.7 L510.3 429.3 L511.0 425.7 L511.7 421.6 L512.3 423.7 L513.0 421.6 L513.7 423.7 L514.4 421.6 L515.0 419.6 L515.7 419.6 L516.4 417.6 L517.0 429.3 L517.7 417.6 L518.4 419.6 L519.0 419.6 L519.7 419.6 L520.4 421.6 L521.0 423.7 L521.7 423.7 L522.4 421.6 L523.0 421.6 L523.7 421.6 L524.4 423.7 L525.0 421.6 L525.7 425.7 L526.4 417.6 L527.1 436.1 L527.7 419.6 L528.4 421.6 L529.1 419.6 L529.7 421.6 L530.4 419.6 L531.1 421.6 L531.7 419.6 L532.4 419.6 L533.1 417.6 L533.7 423.7 L534.4 421.6 L535.1 423.7 L535.7 421.6 L536.4 421.6 L537.1 417.6 L537.8 421.6 L538.4 427.3 L539.1 429.3 L539.8 421.6 L540.4 421.6 L541.1 419.6 L541.8 421.6 L542.4 437.7 L543.1 421.6 L543.8 423.7 L544.4 421.6 L545.1 421.6 L545.8 421.6 L546.4 423.7 L547.1 421.6 L547.8 419.6 L548.4 425.7 L549.1 423.7 L549.8 425.7 L550.5 421.6 L551.1 423.7 L551.8 429.4 L552.5 419.6 L553.1 421.6 L553.8 427.3 L554.5 421.6 L555.1 421.6 L555.8 423.7 L556.5 423.7 L557.1 433.4 L557.8 423.7 L558.5 423.7 L559.1 421.6 L559.8 423.7 L560.5 421.6 L561.2 423.7 L561.8 419.6 L562.5 419.6 L563.2 417.6 L563.8 421.6 L564.5 419.6 L565.2 423.7 L565.8 421.6 L566.5 421.6 L567.2 419.6 L567.8 421.6 L568.5 419.6 L569.2 419.6 L569.8 419.6 L570.5 419.6 L571.2 417.6 L571.8 427.3 L572.5 425.7 L573.2 425.7 L573.9 419.6 L574.5 423.7 L575.2 419.6 L575.9 419.6 L576.5 421.6 L577.2 421.6 L577.9 419.6 L578.5 442.1 L579.2 456.1 L579.9 417.6 L580.5 419.6 L581.2 423.7 L581.9 425.7 L582.5 417.6 L583.2 417.6 L583.9 421.6 L584.6 421.6 L585.2 419.6 L585.9 417.6 L586.6 419.6 L587.2 417.6 L587.9 419.6 L588.6 417.6 L589.2 417.6 L589.9 450.6 L590.6 421.6 L591.2 423.7 L591.9 439.4 L592.6 419.6 L593.2 417.6 L593.9 419.6 L594.6 421.6 L595.2 417.6 L595.9 417.6 L596.6 433.9 L597.3 421.6 L597.9 421.6 L598.6 421.6 L599.3 421.6 L599.9 421.6 L600.6 417.6 L601.3 417.6 L601.9 423.7 L602.6 423.7 L603.3 417.6 L603.9 417.6 L604.6 423.7 L605.3 429.4 L605.9 423.7 L606.6 421.6 L607.3 421.6 L608.0 423.7 L608.6 421.6 L609.3 429.4 L610.0 421.6 L610.6 419.6 L611.3 423.7 L612.0 423.7 L612.6 425.7 L613.3 421.6 L614.0 425.7 L614.6 427.3 L615.3 425.7 L616.0 425.7 L616.6 417.6 L617.3 417.6 L618.0 421.6 L618.6 425.7 L619.3 417.6 L620.0 417.6 L620.7 419.6 L621.3 421.6 L622.0 421.6 L622.7 419.6 L623.3 421.6 L624.0 419.6 L624.7 419.6 L625.3 419.6 L626.0 421.6 L626.7 419.6 L627.3 419.6 L628.0 421.6 L628.7 421.6 L629.3 423.7 L630.0 425.7 L630.7 436.1 L631.4 419.6 L632.0 417.6 L632.7 419.6 L633.4 417.6 L634.0 419.6 L634.7 419.6 L635.4 428.3 L636.0 423.7 L636.7 419.6 L637.4 417.6 L638.0 417.6 L638.7 417.6 L639.4 419.6 L640.0 421.6 L640.7 419.6 L641.4 419.6 L642.0 419.6 L642.7 417.6 L643.4 427.3 L644.1 429.4 L644.7 425.7 L645.4 423.7 L646.1 421.6 L646.7 419.6 L647.4 429.3 L648.1 433.4 L648.7 421.6 L649.4 433.9 L650.1 419.6 L650.7 417.6 L651.4 421.6 L652.1 421.6 L652.7 419.6 L653.4 421.6 L654.1 421.6 L654.8 421.6 L655.4 423.7 L656.1 423.7 L656.8 421.6 L657.4 433.4 L658.1 419.6 L658.8 419.6 L659.4 428.3 L660.1 419.6 L660.8 419.6 L661.4 421.6 L662.1 421.6 L662.8 423.7 L663.4 421.6 L664.1 421.6 L664.8 419.6 L665.4 421.6 L666.1 425.7 L666.8 419.6 L667.5 419.6 L668.1 417.6 L668.8 421.6 L669.5 419.6 L670.1 421.6 L670.8 436.1 L671.5 419.6 L672.1 425.7 L672.8 419.6 L673.5 425.7 L674.1 423.7 L674.8 419.6 L675.5 421.6 L676.1 419.6 L676.8 421.6 L677.5 442.1 L678.1 419.6 L678.8 421.6 L679.5 421.6 L680.2 421.6 L680.8 425.7 L681.5 417.6 L682.2 417.6 L682.8 425.7 L683.5 419.6 L684.2 421.6 L684.8 423.7 L685.5 423.7 L686.2 421.6 L686.8 421.6 L687.5 419.6 L688.2 421.6 L688.8 421.6 L689.5 421.6 L690.2 421.6 L690.9 425.0 L691.5 421.6 L692.2 417.6 L692.9 423.7 L693.5 425.7 L694.2 419.6 L694.9 421.6 L695.5 419.6 L696.2 419.6 L696.9 421.6 L697.5 429.4 L698.2 421.6 L698.9 419.6 L699.5 423.7 L700.2 423.7 L700.9 421.6 L701.5 421.6 L702.2 423.7 L702.9 423.7 L703.6 423.7 L704.2 419.6 L704.9 435.7 L705.6 425.7 L706.2 423.7 L706.9 423.7 L707.6 423.7 L708.2 425.7 L708.9 417.6 L709.6 419.6 L710.2 421.6 L710.9 419.6 L711.6 421.6 L712.2 429.3 L712.9 423.7 L713.6 425.7 L714.3 419.6 L714.9 423.7 L715.6 419.6 L716.3 417.6 L716.9 458.3 L717.6 417.6 L718.3 419.6 L718.9 423.7 L719.6 425.7 L720.3 421.6 L720.9 419.6 L721.6 421.6 L722.3 419.6 L722.9 423.7 L723.6 423.7 L724.3 425.7 L724.9 425.7 L725.6 425.7 L726.3 425.7 L727.0 425.7 L727.6 423.7 L728.3 423.7 L729.0 421.6 L729.6 421.6 L730.3 421.6 L731.0 419.6 L731.6 419.6 L732.3 421.6 L733.0 421.6 L733.6 419.6 L734.3 419.6 L735.0 417.6 L735.6 433.9 L736.3 419.6 L737.0 423.7 L737.7 425.7 L738.3 421.6 L739.0 423.7 L739.7 419.6 L740.3 419.6 L741.0 421.6 L741.7 421.6 L742.3 421.6 L743.0 419.6 L743.7 429.3 L744.3 421.6 L745.0 421.6 L745.7 423.7 L746.3 423.7 L747.0 423.7 L747.7 425.7 L748.3 425.7 L749.0 425.7 L749.7 425.7 L750.4 419.6 L751.0 427.9 L751.7 421.6 L752.4 423.7 L753.0 421.6 L753.7 421.6 L754.4 421.6 L755.0 417.6 L755.7 419.6 L756.4 421.6 L757.0 421.6 L757.7 421.6 L758.4 419.6 L759.0 421.6 L759.7 423.7 L760.4 425.7 L761.1 425.7 L761.7 425.7 L762.4 419.6 L763.1 425.7 L763.7 437.7 L764.4 419.6 L765.1 427.3 L765.7 425.7 L766.4 425.7 L767.1 421.6 L767.7 419.6 L768.4 419.6 L769.1 423.7 L769.7 429.4 L770.4 421.6 L771.1 417.6 L771.7 423.7 L772.4 421.6 L773.1 419.6 L773.8 417.6 L774.4 419.6 L775.1 423.7 L775.8 423.7 L776.4 423.7 L777.1 421.6 L777.8 423.7 L778.4 425.7 L779.1 419.6 L779.8 421.6 L780.4 425.7 L781.1 423.7 L781.8 425.7 L782.4 425.7 L783.1 425.7 L783.8 425.7 L784.5 425.7 L785.1 419.6 L785.8 421.6 L786.5 421.6 L787.1 421.6 L787.8 419.6 L788.5 421.6 L789.1 421.6 L789.8 419.6 L790.5 421.6 L791.1 417.6 L791.8 419.6 L792.5 425.7 L793.1 419.6 L793.8 433.4 L794.5 417.6 L795.1 423.7 L795.8 421.6 L796.5 423.7 L797.2 421.6 L797.8 421.6 L798.5 433.4 L799.2 419.6 L799.8 421.6 L800.5 423.7 L801.2 425.7 L801.8 425.7 L802.5 423.7 L803.2 423.7 L803.8 423.7 L804.5 423.7 L805.2 421.6 L805.8 419.6 L806.5 429.3 L807.2 419.6 L807.9 436.2 L808.5 419.6 L809.2 421.6 L809.9 423.7 L810.5 444.0 L811.2 419.6 L811.9 423.7 L812.5 419.6 L813.2 425.7 L813.9 423.7 L814.5 433.4 L815.2 431.7 L815.9 423.7 L816.5 421.6 L817.2 423.7 L817.9 421.6 L818.5 419.6 L819.2 421.6 L819.9 423.7 L820.6 421.6 L821.2 419.6 L821.9 423.7 L822.6 425.7 L823.2 423.7 L823.9 419.6 L824.6 419.6 L825.2 421.6 L825.9 419.6 L826.6 421.6 L827.2 421.6 L827.9 417.6 L828.6 421.6 L829.2 433.6 L829.9 425.7 L830.6 425.7 L831.3 425.7 L831.9 429.3 L832.6 421.6 L833.3 421.6 L833.9 425.7 L834.6 444.0 L835.3 425.7 L835.9 421.6 L836.6 419.6 L837.3 421.6 L837.9 423.7 L838.6 419.6 L839.3 419.6 L839.9 417.6 L840.6 419.6 L841.3 419.6 L841.9 421.6 L842.6 419.6 L843.3 419.6 L844.0 417.6 L844.6 419.6 L845.3 423.7 L846.0 419.6 L846.6 417.6 L847.3 417.6 L848.0 419.6 L848.6 421.6 L849.3 419.6 L850.0 417.6 L850.6 417.6 L851.3 417.6 L852.0 421.6 L852.6 419.6 L853.3 419.6 L854.0 421.6 L854.7 419.6 L855.3 417.6 L856.0 417.6 L856.7 419.6 L857.3 431.0 L858.0 425.7 L858.7 447.8 L859.3 417.6" fill="none" stroke="#cc55cc" stroke-width="0.7"/>
<path d="M39.0 423.7h0M39.7 421.6h0M40.3 431.4h0M41.0 423.7h0M41.7 421.6h0M42.3 431.7h0M43.0 421.6h0M43.7 419.6h0M44.3 423.7h0M45.0 437.7h0M45.7 423.7h0M46.4 421.6h0M47.0 419.6h0M47.7 421.6h0M48.4 419.6h0M49.0 421.6h0M49.7 419.6h0M50.4 430.6h0M51.0 419.6h0M51.7 425.7h0M52.4 423.7h0M53.0 423.7h0M53.7 421.6h0M54.4 421.6h0M55.0 433.9h0M55.7 421.6h0M56.4 419.6h0M57.1 417.6h0M57.7 417.6h0M58.4 419.6h0M59.1 417.6h0M59.7 421.6h0M60.4 421.6h0M61.1 421.6h0M61.7 423.7h0M62.4 429.3h0M63.1 425.7h0M63.7 421.6h0M64.4 419.6h0M65.1 417.6h0M65.7 428.3h0M66.4 421.6h0M67.1 423.7h0M67.7 423.7h0M68.4 429.3h0M69.1 417.6h0M69.8 423.7h0M70.4 423.7h0M71.1 423.7h0M71.8 423.7h0M72.4 423.7h0M73.1 419.6h0M73.8 425.4h0M74.4 427.3h0M75.1 423.7h0M75.8 421.6h0M76.4 419.6h0M77.1 421.6h0M77.8 423.7h0M78.4 421.6h0M79.1 421.6h0M79.8 421.6h0M80.5 421.6h0M81.1 419.6h0M81.8 419.6h0M82.5 421.6h0M83.1 437.2h0M83.8 419.6h0M84.5 442.1h0M85.1 419.6h0M85.8 419.6h0M86.5 419.6h0M87.1 421.6h0M87.8 423.7h0M88.5 421.6h0M89.1 419.6h0M89.8 417.6h0M90.5 429.3h0M91.1 417.6h0M91.8 429.3h0M92.5 423.7h0M93.2 421.6h0M93.8 421.6h0M94.5 419.6h0M95.2 417.6h0M95.8 421.6h0M96.5 429.3h0M97.2 421.6h0M97.8 429.9h0M98.5 419.6h0M99.2 423.7h0M99.8 421.6h0M100.5 419.6h0M101.2 417.6h0M101.8 423.7h0M102.5 421.6h0M103.2 421.6h0M103.9 423.7h0M104.5 423.7h0M105.2 423.7h0M105.9 425.7h0M106.5 428.3h0M107.2 419.6h0M107.9 417.6h0M108.5 417.6h0M109.2 421.6h0M109.9 423.7h0M110.5 425.7h0M111.2 419.6h0M111.9 423.7h0M112.5 417.6h0M113.2 419.6h0M113.9 419.6h0M114.5 421.6h0M115.2 421.6h0M115.9 421.6h0M116.6 423.7h0M117.2 419.6h0M117.9 425.7h0M118.6 425.7h0M119.2 427.3h0M119.9 425.7h0M120.6 433.9h0M121.2 419.6h0M121.9 423.7h0M122.6 423.7h0M123.2 423.7h0M123.9 429.3h0M124.6 423.7h0M125.2 421.6h0M125.9 419.6h0M126.6 419.6h0M127.3 419.6h0M127.9 419.6h0M128.6 427.3h0M129.3 425.7h0M129.9 421.6h0M130.6 419.6h0M131.3 427.3h0M131.9 421.6h0M132.6 419.6h0M133.3 423.7h0M133.9 421.6h0M134.6 423.7h0M135.3 421.6h0M135.9 423.7h0M136.6 421.6h0M137.3 419.6h0M137.9 444.3h0M138.6 423.7h0M139.3 419.6h0M140.0 421.6h0M140.6 419.6h0M141.3 429.3h0M142.0 425.7h0M142.6 425.7h0M143.3 421.6h0M144.0 421.6h0M144.6 425.7h0M145.3 425.7h0M146.0 419.6h0M146.6 423.7h0M147.3 419.6h0M148.0 421.6h0M148.6 423.7h0M149.3 425.7h0M150.0 421.6h0M150.7 429.3h0M151.3 417.6h0M152.0 421.6h0M152.7 431.7h0M153.3 419.6h0M154.0 427.3h0M154.7 421.6h0M155.3 421.6h0M156.0 423.7h0M156.7 419.6h0M157.3 421.6h0M158.0 423.7h0M158.7 419.6h0M159.3 417.6h0M160.0 419.6h0M160.7 423.7h0M161.3 423.7h0M162.0 425.7h0M162.7 425.7h0M163.4 421.6h0M164.0 417.6h0M164.7 417.6h0M165.4 417.6h0M166.0 417.6h0M166.7 419.6h0M167.4 425.7h0M168.0 419.6h0M168.7 425.7h0M169.4 421.6h0M170.0 421.6h0M170.7 423.7h0M171.4 423.7h0M172.0 421.6h0M172.7 421.6h0M173.4 423.7h0M174.1 423.7h0M174.7 423.7h0M175.4 423.7h0M176.1 423.7h0M176.7 423.7h0M177.4 425.7h0M178.1 425.7h0M178.7 425.7h0M179.4 425.7h0M180.1 425.7h0M180.7 431.7h0M181.4 419.6h0M182.1 419.6h0M182.7 421.6h0M183.4 419.6h0M184.1 427.3h0M184.7 417.6h0M185.4 419.6h0M186.1 423.7h0M186.8 419.6h0M187.4 419.6h0M188.1 421.6h0M188.8 417.6h0M189.4 423.7h0M190.1 437.7h0M190.8 423.7h0M191.4 423.7h0M192.1 421.6h0M192.8 423.7h0M193.4 421.6h0M194.1 421.6h0M194.8 423.7h0M195.4 425.7h0M196.1 425.7h0M196.8 423.7h0M197.5 458.3h0M198.1 423.7h0M198.8 423.7h0M199.5 421.6h0M200.1 423.7h0M200.8 423.7h0M201.5 421.6h0M202.1 421.6h0M202.8 423.7h0M203.5 425.7h0M204.1 425.7h0M204.8 425.7h0M205.5 417.6h0M206.1 425.0h0M206.8 423.7h0M207.5 423.7h0M208.1 425.7h0M208.8 425.7h0M209.5 425.7h0M210.2 425.7h0M210.8 425.7h0M211.5 431.4h0M212.2 421.6h0M212.8 421.6h0M213.5 423.7h0M214.2 423.7h0M214.8 421.6h0M215.5 419.6h0M216.2 425.7h0M216.8 423.7h0M217.5 433.9h0M218.2 419.6h0M218.8 423.7h0M219.5 417.6h0M220.2 417.6h0M220.9 419.6h0M221.5 423.7h0M222.2 425.7h0M222.9 423.7h0M223.5 423.7h0M224.2 417.6h0M224.9 417.6h0M225.5 421.6h0M226.2 423.7h0M226.9 421.6h0M227.5 419.6h0M228.2 419.6h0M228.9 421.6h0M229.5 423.7h0M230.2 442.1h0M230.9 421.6h0M231.5 423.7h0M232.2 425.7h0M232.9 419.6h0M233.6 421.6h0M234.2 425.7h0M234.9 425.7h0M235.6 419.6h0M236.2 419.6h0M236.9 421.6h0M237.6 421.6h0M238.2 423.7h0M238.9 425.7h0M239.6 425.7h0M240.2 423.7h0M240.9 421.6h0M241.6 419.6h0M242.2 421.6h0M242.9 423.7h0M243.6 423.7h0M244.2 421.6h0M244.9 419.6h0M245.6 423.7h0M246.3 425.7h0M246.9 419.6h0M247.6 419.6h0M248.3 425.7h0M248.9 425.7h0M249.6 425.7h0M250.3 421.6h0M250.9 425.7h0M251.6 425.7h0M252.3 425.7h0M252.9 425.7h0M253.6 419.6h0M254.3 421.6h0M254.9 419.6h0M255.6 419.6h0M256.3 421.6h0M257.0 423.7h0M257.6 425.7h0M258.3 419.6h0M259.0 421.6h0M259.6 419.6h0M260.3 419.6h0M261.0 421.6h0M261.6 425.7h0M262.3 423.7h0M263.0 423.7h0M263.6 423.7h0M264.3 421.6h0M265.0 421.6h0M265.6 423.7h0M266.3 419.6h0M267.0 419.6h0M267.6 421.6h0M268.3 431.7h0M269.0 423.7h0M269.7 419.6h0M270.3 417.6h0M271.0 421.6h0M271.7 419.6h0M272.3 421.6h0M273.0 421.6h0M273.7 421.6h0M274.3 433.9h0M275.0 421.6h0M275.7 419.6h0M276.3 421.6h0M277.0 419.6h0M277.7 419.6h0M278.3 417.6h0M279.0 417.6h0M279.7 417.6h0M280.4 425.7h0M281.0 425.7h0M281.7 423.7h0M282.4 421.6h0M283.0 433.4h0M283.7 421.6h0M284.4 425.7h0M285.0 429.3h0M285.7 423.7h0M286.4 421.6h0M287.0 421.6h0M287.7 425.7h0M288.4 425.7h0M289.0 423.7h0M289.7 427.3h0M290.4 421.6h0M291.0 421.6h0M291.7 429.3h0M292.4 425.7h0M293.1 421.6h0M293.7 423.7h0M294.4 421.6h0M295.1 423.7h0M295.7 419.6h0M296.4 421.6h0M297.1 417.6h0M297.7 419.6h0M298.4 423.7h0M299.1 419.6h0M299.7 417.6h0M300.4 417.6h0M301.1 417.6h0M301.7 417.6h0M302.4 421.6h0M303.1 419.6h0M303.8 417.6h0M304.4 421.6h0M305.1 419.6h0M305.8 439.9h0M306.4 429.3h0M307.1 419.6h0M307.8 423.7h0M308.4 417.6h0M309.1 423.7h0M309.8 429.3h0M310.4 421.6h0M311.1 425.7h0M311.8 425.7h0M312.4 423.7h0M313.1 421.6h0M313.8 423.7h0M314.4 419.6h0M315.1 417.6h0M315.8 423.7h0M316.5 423.7h0M317.1 425.7h0M317.8 419.6h0M318.5 417.6h0M319.1 417.6h0M319.8 419.6h0M320.5 419.6h0M321.1 421.6h0M321.8 419.6h0M322.5 444.3h0M323.1 427.3h0M323.8 419.6h0M324.5 417.6h0M325.1 417.6h0M325.8 419.6h0M326.5 423.7h0M327.2 423.7h0M327.8 425.7h0M328.5 421.6h0M329.2 423.7h0M329.8 423.7h0M330.5 419.6h0M331.2 419.6h0M331.8 421.6h0M332.5 431.4h0M333.2 431.7h0M333.8 423.7h0M334.5 423.7h0M335.2 421.6h0M335.8 423.7h0M336.5 421.6h0M337.2 423.7h0M337.8 423.7h0M338.5 417.6h0M339.2 417.6h0M339.9 417.6h0M340.5 417.6h0M341.2 417.6h0M341.9 431.4h0M342.5 417.6h0M343.2 421.6h0M343.9 421.6h0M344.5 421.6h0M345.2 421.6h0M345.9 419.6h0M346.5 417.6h0M347.2 423.7h0M347.9 423.7h0M348.5 425.7h0M349.2 423.7h0M349.9 423.7h0M350.6 423.7h0M351.2 425.7h0M351.9 425.7h0M352.6 425.7h0M353.2 423.7h0M353.9 421.6h0M354.6 421.6h0M355.2 427.3h0M355.9 421.6h0M356.6 419.6h0M357.2 421.6h0M357.9 419.6h0M358.6 427.3h0M359.2 419.6h0M359.9 423.7h0M360.6 421.6h0M361.2 421.6h0M361.9 417.6h0M362.6 419.6h0M363.3 429.4h0M363.9 421.6h0M364.6 421.6h0M365.3 419.6h0M365.9 419.6h0M366.6 419.6h0M367.3 417.6h0M367.9 419.6h0M368.6 423.7h0M369.3 421.6h0M369.9 417.6h0M370.6 419.6h0M371.3 421.6h0M371.9 421.6h0M372.6 425.7h0M373.3 423.7h0M374.0 419.6h0M374.6 419.6h0M375.3 419.6h0M376.0 417.6h0M376.6 421.6h0M377.3 423.7h0M378.0 421.6h0M378.6 423.7h0M379.3 421.6h0M380.0 423.7h0M380.6 421.6h0M381.3 419.6h0M382.0 421.6h0M382.6 421.6h0M383.3 421.6h0M384.0 421.6h0M384.6 436.1h0M385.3 421.6h0M386.0 423.7h0M386.7 425.7h0M387.3 419.6h0M388.0 419.6h0M388.7 421.6h0M389.3 419.6h0M390.0 423.7h0M390.7 421.6h0M391.3 423.7h0M392.0 417.6h0M392.7 417.6h0M393.3 417.6h0M394.0 423.7h0M394.7 423.7h0M395.3 421.6h0M396.0 419.6h0M396.7 417.6h0M397.4 419.6h0M398.0 417.6h0M398.7 433.4h0M399.4 429.3h0M400.0 419.6h0M400.7 421.6h0M401.4 421.6h0M402.0 423.7h0M402.7 419.6h0M403.4 419.6h0M404.0 419.6h0M404.7 417.6h0M405.4 421.6h0M406.0 423.7h0M406.7 429.3h0M407.4 425.7h0M408.0 421.6h0M408.7 421.6h0M409.4 421.6h0M410.1 423.7h0M410.7 421.6h0M411.4 417.6h0M412.1 433.4h0M412.7 421.6h0M413.4 423.7h0M414.1 419.6h0M414.7 421.6h0M415.4 419.6h0M416.1 419.6h0M416.7 419.6h0M417.4 419.6h0M418.1 417.6h0M418.7 421.6h0M419.4 419.6h0M420.1 421.6h0M420.8 421.6h0M421.4 452.3h0M422.1 421.6h0M422.8 421.6h0M423.4 423.7h0M424.1 425.7h0M424.8 419.6h0M425.4 417.6h0M426.1 419.6h0M426.8 436.1h0M427.4 419.6h0M428.1 419.6h0M428.8 419.6h0M429.4 417.6h0M430.1 417.6h0M430.8 429.4h0M431.4 421.6h0M432.1 421.6h0M432.8 423.7h0M433.5 419.6h0M434.1 421.6h0M434.8 425.7h0M435.5 423.7h0M436.1 425.7h0M436.8 423.7h0M437.5 423.7h0M438.1 421.6h0M438.8 421.6h0M439.5 419.6h0M440.1 419.6h0M440.8 417.6h0M441.5 425.7h0M442.1 425.7h0M442.8 425.7h0M443.5 425.7h0M444.2 423.7h0M444.8 417.6h0M445.5 419.6h0M446.2 419.6h0M446.8 419.6h0M447.5 428.3h0M448.2 421.6h0M448.8 421.6h0M449.5 419.6h0M450.2 419.6h0M450.8 421.6h0M451.5 421.6h0M452.2 421.6h0M452.8 423.7h0M453.5 425.7h0M454.2 425.7h0M454.8 423.7h0M455.5 425.7h0M456.2 423.7h0M456.9 423.7h0M457.5 421.6h0M458.2 425.7h0M458.9 423.7h0M459.5 421.6h0M460.2 419.6h0M460.9 421.6h0M461.5 423.7h0M462.2 421.6h0M462.9 419.6h0M463.5 423.7h0M464.2 417.6h0M464.9 419.6h0M465.5 423.7h0M466.2 425.7h0M466.9 438.3h0M467.6 425.7h0M468.2 423.7h0M468.9 425.7h0M469.6 419.6h0M470.2 423.7h0M470.9 421.6h0M471.6 423.7h0M472.2 421.6h0M472.9 427.3h0M473.6 425.7h0M474.2 423.7h0M474.9 427.3h0M475.6 421.6h0M476.2 431.4h0M476.9 436.1h0M477.6 417.6h0M478.2 423.7h0M478.9 421.6h0M479.6 419.6h0M480.3 419.6h0M480.9 419.6h0M481.6 425.7h0M482.3 423.7h0M482.9 425.7h0M483.6 425.7h0M484.3 423.7h0M484.9 419.6h0M485.6 417.6h0M486.3 421.6h0M486.9 423.7h0M487.6 423.7h0M488.3 425.7h0M488.9 421.6h0M489.6 421.6h0M490.3 433.4h0M491.0 421.6h0M491.6 419.6h0M492.3 419.6h0M493.0 421.6h0M493.6 419.6h0M494.3 417.6h0M495.0 421.6h0M495.6 429.3h0M496.3 421.6h0M497.0 425.7h0M497.6 431.4h0M498.3 423.7h0M499.0 417.6h0M499.6 428.3h0M500.3 421.6h0M501.0 423.7h0M501.6 421.6h0M502.3 421.6h0M503.0 421.6h0M503.7 419.6h0M504.3 425.7h0M505.0 423.7h0M505.7 421.6h0M506.3 419.6h0M507.0 431.4h0M507.7 421.6h0M508.3 425.7h0M509.0 425.7h0M509.7 423.7h0M510.3 429.3h0M511.0 425.7h0M511.7 421.6h0M512.3 423.7h0M513.0 421.6h0M513.7 423.7h0M514.4 421.6h0M515.0 419.6h0M515.7 419.6h0M516.4 417.6h0M517.0 429.3h0M517.7 417.6h0M518.4 419.6h0M519.0 419.6h0M519.7 419.6h0M520.4 421.6h0M521.0 423.7h0M521.7 423.7h0M522.4 421.6h0M523.0 421.6h0M523.7 421.6h0M524.4 423.7h0M525.0 421.6h0M525.7 425.7h0M526.4 417.6h0M527.1 436.1h0M527.7 419.6h0M528.4 421.6h0M529.1 419.6h0M529.7 421.6h0M530.4 419.6h0M531.1 421.6h0M531.7 419.6h0M532.4 419.6h0M533.1 417.6h0M533.7 423.7h0M534.4 421.6h0M535.1 423.7h0M535.7 421.6h0M536.4 421.6h0M537.1 417.6h0M537.8 421.6h0M538.4 427.3h0M539.1 429.3h0M539.8 421.6h0M540.4 421.6h0M541.1 419.6h0M541.8 421.6h0M542.4 437.7h0M543.1 421.6h0M543.8 423.7h0M544.4 421.6h0M545.1 421.6h0M545.8 421.6h0M546.4 423.7h0M547.1 421.6h0M547.8 419.6h0M548.4 425.7h0M549.1 423.7h0M549.8 425.7h0M550.5 421.6h0M551.1 423.7h0M551.8 429.4h0M552.5 419.6h0M553.1 421.6h0M553.8 427.3h0M554.5 421.6h0M555.1 421.6h0M555.8 423.7h0M556.5 423.7h0M557.1 433.4h0M557.8 423.7h0M558.5 423.7h0M559.1 421.6h0M559.8 423.7h0M560.5 421.6h0M561.2 423.7h0M561.8 419.6h0M562.5 419.6h0M563.2 417.6h0M563.8 421.6h0M564.5 419.6h0M565.2 423.7h0M565.8 421.6h0M566.5 421.6h0M567.2 419.6h0M567.8 421.6h0M568.5 419.6h0M569.2 419.6h0M569.8 419.6h0M570.5 419.6h0M571.2 417.6h0M571.8 427.3h0M572.5 425.7h0M573.2 425.7h0M573.9 419.6h0M574.5 423.7h0M575.2 419.6h0M575.9 419.6h0M576.5 421.6h0M577.2 421.6h0M577.9 419.6h0M578.5 442.1h0M579.2 456.1h0M579.9 417.6h0M580.5 419.6h0M581.2 423.7h0M581.9 425.7h0M582.5 417.6h0M583.2 417.6h0M583.9 421.6h0M584.6 421.6h0M585.2 419.6h0M585.9 417.6h0M586.6 419.6h0M587.2 417.6h0M587.9 419.6h0M588.6 417.6h0M589.2 417.6h0M589.9 450.6h0M590.6 421.6h0M591.2 423.7h0M591.9 439.4h0M592.6 419.6h0M593.2 417.6h0M593.9 419.6h0M594.6 421.6h0M595.2 417.6h0M595.9 417.6h0M596.6 433.9h0M597.3 421.6h0M597.9 421.6h0M598.6 421.6h0M599.3 421.6h0M599.9 421.6h0M600.6 417.6h0M601.3 417.6h0M601.9 423.7h0M602.6 423.7h0M603.3 417.6h0M603.9 417.6h0M604.6 423.7h0M605.3 429.4h0M605.9 423.7h0M606.6 421.6h0M607.3 421.6h0M608.0 423.7h0M608.6 421.6h0M609.3 429.4h0M610.0 421.6h0M610.6 419.6h0M611.3 423.7h0M612.0 423.7h0M612.6 425.7h0M613.3 421.6h0M614.0 425.7h0M614.6 427.3h0M615.3 425.7h0M616.0 425.7h0M616.6 417.6h0M617.3 417.6h0M618.0 421.6h0M618.6 425.7h0M619.3 417.6h0M620.0 417.6h0M620.7 419.6h0M621.3 421.6h0M622.0 421.6h0M622.7 419.6h0M623.3 421.6h0M624.0 419.6h0M624.7 419.6h0M625.3 419.6h0M626.0 421.6h0M626.7 419.6h0M627.3 419.6h0M628.0 421.6h0M628.7 421.6h0M629.3 423.7h0M630.0 425.7h0M630.7 436.1h0M631.4 419.6h0M632.0 417.6h0M632.7 419.6h0M633.4 417.6h0M634.0 419.6h0M634.7 419.6h0M635.4 428.3h0M636.0 423.7h0M636.7 419.6h0M637.4 417.6h0M638.0 417.6h0M638.7 417.6h0M639.4 419.6h0M640.0 421.6h0M640.7 419.6h0M641.4 419.6h0M642.0 419.6h0M642.7 417.6h0M643.4 427.3h0M644.1 429.4h0M644.7 425.7h0M645.4 423.7h0M646.1 421.6h0M646.7 419.6h0M647.4 429.3h0M648.1 433.4h0M648.7 421.6h0M649.4 433.9h0M650.1 419.6h0M650.7 417.6h0M651.4 421.6h0M652.1 421.6h0M652.7 419.6h0M653.4 421.6h0M654.1 421.6h0M654.8 421.6h0M655.4 423.7h0M656.1 423.7h0M656.8 421.6h0M657.4 433.4h0M658.1 419.6h0M658.8 419.6h0M659.4 428.3h0M660.1 419.6h0M660.8 419.6h0M661.4 421.6h0M662.1 421.6h0M662.8 423.7h0M663.4 421.6h0M664.1 421.6h0M664.8 419.6h0M665.4 421.6h0M666.1 425.7h0M666.8 419.6h0M667.5 419.6h0M668.1 417.6h0M668.8 421.6h0M669.5 419.6h0M670.1 421.6h0M670.8 436.1h0M671.5 419.6h0M672.1 425.7h0M672.8 419.6h0M673.5 425.7h0M674.1 423.7h0M674.8 419.6h0M675.5 421.6h0M676.1 419.6h0M676.8 421.6h0M677.5 442.1h0M678.1 419.6h0M678.8 421.6h0M679.5 421.6h0M680.2 421.6h0M680.8 425.7h0M681.5 417.6h0M682.2 417.6h0M682.8 425.7h0M683.5 419.6h0M684.2 421.6h0M684.8 423.7h0M685.5 423.7h0M686.2 421.6h0M686.8 421.6h0M687.5 419.6h0M688.2 421.6h0M688.8 421.6h0M689.5 421.6h0M690.2 421.6h0M690.9 425.0h0M691.5 421.6h0M692.2 417.6h0M692.9 423.7h0M693.5 425.7h0M694.2 419.6h0M694.9 421.6h0M695.5 419.6h0M696.2 419.6h0M696.9 421.6h0M697.5 429.4h0M698.2 421.6h0M698.9 419.6h0M699.5 423.7h0M700.2 423.7h0M700.9 421.6h0M701.5 421.6h0M702.2 423.7h0M702.9 423.7h0M703.6 423.7h0M704.2 419.6h0M704.9 435.7h0M705.6 425.7h0M706.2 423.7h0M706.9 423.7h0M707.6 423.7h0M708.2 425.7h0M708.9 417.6h0M709.6 419.6h0M710.2 421.6h0M710.9 419.6h0M711.6 421.6h0M712.2 429.3h0M712.9 423.7h0M713.6 425.7h0M714.3 419.6h0M714.9 423.7h0M715.6 419.6h0M716.3 417.6h0M716.9 458.3h0M717.6 417.6h0M718.3 419.6h0M718.9 423.7h0M719.6 425.7h0M720.3 421.6h0M720.9 419.6h0M721.6 421.6h0M722.3 419.6h0M722.9 423.7h0M723.6 423.7h0M724.3 425.7h0M724.9 425.7h0M725.6 425.7h0M726.3 425.7h0M727.0 425.7h0M727.6 423.7h0M728.3 423.7h0M729.0 421.6h0M729.6 421.6h0M730.3 421.6h0M731.0 419.6h0M731.6 419.6h0M732.3 421.6h0M733.0 421.6h0M733.6 419.6h0M734.3 419.6h0M735.0 417.6h0M735.6 433.9h0M736.3 419.6h0M737.0 423.7h0M737.7 425.7h0M738.3 421.6h0M739.0 423.7h0M739.7 419.6h0M740.3 419.6h0M741.0 421.6h0M741.7 421.6h0M742.3 421.6h0M743.0 419.6h0M743.7 429.3h0M744.3 421.6h0M745.0 421.6h0M745.7 423.7h0M746.3 423.7h0M747.0 423.7h0M747.7 425.7h0M748.3 425.7h0M749.0 425.7h0M749.7 425.7h0M750.4 419.6h0M751.0 427.9h0M751.7 421.6h0M752.4 423.7h0M753.0 421.6h0M753.7 421.6h0M754.4 421.6h0M755.0 417.6h0M755.7 419.6h0M756.4 421.6h0M757.0 421.6h0M757.7 421.6h0M758.4 419.6h0M759.0 421.6h0M759.7 423.7h0M760.4 425.7h0M761.1 425.7h0M761.7 425.7h0M762.4 419.6h0M763.1 425.7h0M763.7 437.7h0M764.4 419.6h0M765.1 427.3h0M765.7 425.7h0M766.4 425.7h0M767.1 421.6h0M767.7 419.6h0M768.4 419.6h0M769.1 423.7h0M769.7 429.4h0M770.4 421.6h0M771.1 417.6h0M771.7 423.7h0M772.4 421.6h0M773.1 419.6h0M773.8 417.6h0M774.4 419.6h0M775.1 423.7h0M775.8 423.7h0M776.4 423.7h0M777.1 421.6h0M777.8 423.7h0M778.4 425.7h0M779.1 419.6h0M779.8 421.6h0M780.4 425.7h0M781.1 423.7h0M781.8 425.7h0M782.4 425.7h0M783.1 425.7h0M783.8 425.7h0M784.5 425.7h0M785.1 419.6h0M785.8 421.6h0M786.5 421.6h0M787.1 421.6h0M787.8 419.6h0M788.5 421.6h0M789.1 421.6h0M789.8 419.6h0M790.5 421.6h0M791.1 417.6h0M791.8 419.6h0M792.5 425.7h0M793.1 419.6h0M793.8 433.4h0M794.5 417.6h0M795.1 423.7h0M795.8 421.6h0M796.5 423.7h0M797.2 421.6h0M797.8 421.6h0M798.5 433.4h0M799.2 419.6h0M799.8 421.6h0M800.5 423.7h0M801.2 425.7h0M801.8 425.7h0M802.5 423.7h0M803.2 423.7h0M803.8 423.7h0M804.5 423.7h0M805.2 421.6h0M805.8 419.6h0M806.5 429.3h0M807.2 419.6h0M807.9 436.2h0M808.5 419.6h0M809.2 421.6h0M809.9 423.7h0M810.5 444.0h0M811.2 419.6h0M811.9 423.7h0M812.5 419.6h0M813.2 425.7h0M813.9 423.7h0M814.5 433.4h0M815.2 431.7h0M815.9 423.7h0M816.5 421.6h0M817.2 423.7h0M817.9 421.6h0M818.5 419.6h0M819.2 421.6h0M819.9 423.7h0M820.6 421.6h0M821.2 419.6h0M821.9 423.7h0M822.6 425.7h0M823.2 423.7h0M823.9 419.6h0M824.6 419.6h0M825.2 421.6h0M825.9 419.6h0M826.6 421.6h0M827.2 421.6h0M827.9 417.6h0M828.6 421.6h0M829.2 433.6h0M829.9 425.7h0M830.6 425.7h0M831.3 425.7h0M831.9 429.3h0M832.6 421.6h0M833.3 421.6h0M833.9 425.7h0M834.6 444.0h0M835.3 425.7h0M835.9 421.6h0M836.6 419.6h0M837.3 421.6h0M837.9 423.7h0M838.6 419.6h0M839.3 419.6h0M839.9 417.6h0M840.6 419.6h0M841.3 419.6h0M841.9 421.6h0M842.6 419.6h0M843.3 419.6h0M844.0 417.6h0M844.6 419.6h0M845.3 423.7h0M846.0 419.6h0M846.6 417.6h0M847.3 417.6h0M848.0 419.6h0M848.6 421.6h0M849.3 419.6h0M850.0 417.6h0M850.6 417.6h0M851.3 417.6h0M852.0 421.6h0M852.6 419.6h0M853.3 419.6h0M854.0 421.6h0M854.7 419.6h0M855.3 417.6h0M856.0 417.6h0M856.7 419.6h0M857.3 431.0h0M858.0 425.7h0M858.7 447.8h0M859.3 417.6h0" fill="none" stroke="#c038c0" stroke-width="2.3" stroke-linecap="round"/>
<path d="M859.3 417.6 L860.0 537.7" fill="none" stroke="#eaaaee" stroke-width="2.2"/>
</svg>

<div class="t" style="left:10.5px;top:473px;font-size:7px;font-weight:bold;color:#333;transform:rotate(-90deg);transform-origin:center">FPS</div>
<div class="t" style="left:872.5px;top:459.5px;font-size:6.6px;font-weight:bold;color:#333;transform:rotate(90deg);transform-origin:center">Jank</div>

<!-- navigator -->
<div class="a" style="left:50.9px;top:555.7px;width:798.5px;height:8px;background:linear-gradient(#44bcfa,#26acf5 60%,#16a0ee)"></div>
<div class="a" style="left:38.9px;top:554.3px;width:12px;height:11.2px;background:#f2f2f2;border:1px solid #c8c8c8;border-radius:2px"></div>
<div class="a" style="left:42.6px;top:557.6px;width:5px;height:4.5px;border-left:1px solid #555;border-right:1px solid #555"></div>
<div class="a" style="left:44.6px;top:557.6px;width:1px;height:4.5px;background:#555"></div>
<div class="a" style="left:849.4px;top:554.4px;width:12px;height:11.2px;background:#f2f2f2;border:1px solid #c8c8c8;border-radius:2px"></div>
<div class="a" style="left:853.1px;top:557.7px;width:5px;height:4.5px;border-left:1px solid #555;border-right:1px solid #555"></div>
<div class="a" style="left:855.1px;top:557.7px;width:1px;height:4.5px;background:#555"></div>

<!-- legend -->
<svg class="a" style="left:330px;top:566px" width="250" height="14" viewBox="330 566 250 14">
 <path d="M338 573.9 h9.4" stroke="#c040c0" stroke-width="1.5"/><circle cx="342.7" cy="573.9" r="1.8" fill="#c040c0"/>
 <path d="M375.4 573.9 h9.9" stroke="#ff7f40" stroke-width="1.5"/><circle cx="380.3" cy="573.9" r="1.8" fill="#ff7f40"/>
 <path d="M416.5 573.9 h9.9" stroke="#e8505e" stroke-width="1.8"/>
 <path d="M466.2 573.9 h10" stroke="#5b9cf0" stroke-width="1.8"/>
 <path d="M514.5 573.9 h9.3" stroke="#40c8e0" stroke-width="1.8"/>
 <g font-size="6.9" fill="#666" font-family="Liberation Sans">
  <text x="352.7" y="576">FPS</text>
  <text x="390" y="576">Jank</text>
  <text x="430.5" y="576">BigJank</text>
  <text x="481.2" y="576">Stutter</text>
  <text x="529" y="576">InterFrame</text>
 </g>
</svg>
<div class="a" style="left:788px;top:581px;width:36px;height:1px;background:#c8c8d0"></div>
</body></html>
